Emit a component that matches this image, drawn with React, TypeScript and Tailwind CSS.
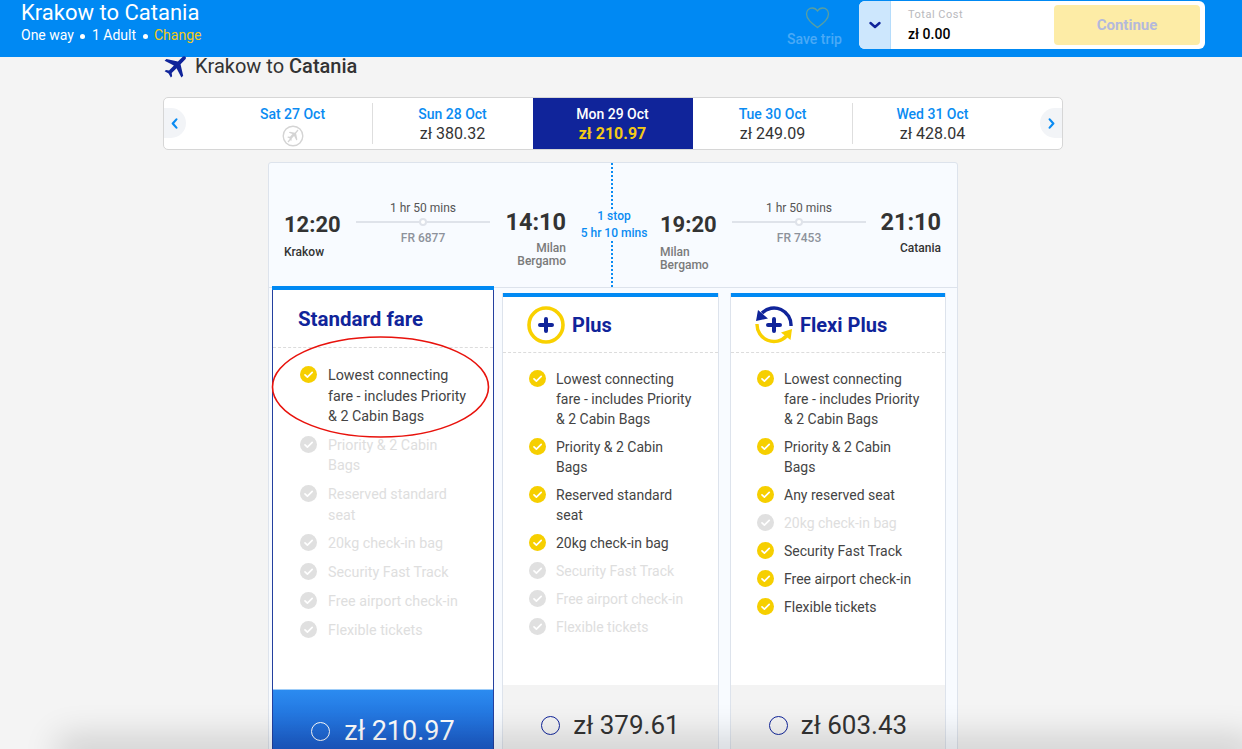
import { MdFlight } from 'react-icons/md';

type Day = { label: string; price?: string; selected?: boolean };
type Feature = { text: string; on: boolean };

const DAYS: Day[] = [
  { label: 'Sat 27 Oct' },
  { label: 'Sun 28 Oct', price: 'zł 380.32' },
  { label: 'Mon 29 Oct', price: 'zł 210.97', selected: true },
  { label: 'Tue 30 Oct', price: 'zł 249.09' },
  { label: 'Wed 31 Oct', price: 'zł 428.04' },
];

const STANDARD: Feature[] = [
  { text: 'Lowest connecting fare - includes Priority & 2 Cabin Bags', on: true },
  { text: 'Priority & 2 Cabin Bags', on: false },
  { text: 'Reserved standard seat', on: false },
  { text: '20kg check-in bag', on: false },
  { text: 'Security Fast Track', on: false },
  { text: 'Free airport check-in', on: false },
  { text: 'Flexible tickets', on: false },
];

const PLUS: Feature[] = [
  { text: 'Lowest connecting fare - includes Priority & 2 Cabin Bags', on: true },
  { text: 'Priority & 2 Cabin Bags', on: true },
  { text: 'Reserved standard seat', on: true },
  { text: '20kg check-in bag', on: true },
  { text: 'Security Fast Track', on: false },
  { text: 'Free airport check-in', on: false },
  { text: 'Flexible tickets', on: false },
];

const FLEXI: Feature[] = [
  { text: 'Lowest connecting fare - includes Priority & 2 Cabin Bags', on: true },
  { text: 'Priority & 2 Cabin Bags', on: true },
  { text: 'Any reserved seat', on: true },
  { text: '20kg check-in bag', on: false },
  { text: 'Security Fast Track', on: true },
  { text: 'Free airport check-in', on: true },
  { text: 'Flexible tickets', on: true },
];

function Dot() {
  return <span className="mx-[6.500px] inline-block h-[5px] w-[5px] rounded-full bg-white align-middle" />;
}

function Chevron({ dir, color, size = 12 }: { dir: 'left' | 'right' | 'down'; color: string; size?: number }) {
  const d = dir === 'left' ? 'M7 1.500 3 6l4 4.500' : dir === 'right' ? 'M4 1.500 8 6l-4 4.500' : 'M1.500 4 6 8l4.500-4';
  return (
    <svg width={size} height={size} viewBox="0 0 12 12" fill="none">
      <path d={d} stroke={color} strokeWidth="2.400" strokeLinecap="round" strokeLinejoin="round" />
    </svg>
  );
}

function NoFlight() {
  return (
    <svg width="22" height="22" viewBox="0 0 22 22" fill="none">
      <circle cx="11" cy="11" r="9.800" stroke="#d4d4d4" strokeWidth="1.400" />
      <path d="M15.500 5.500 13 8l1.400 6.500-1 1-2.400-4.700-2.600 2.500.3 2-.8.7-1.200-2.600-2.400-1.200.7-.8 2 .3 2.500-2.600L5.800 7.700l1-1L13.300 8z" fill="#d4d4d4" transform="translate(1 0)" />
      <path d="M6 17 16 5" stroke="#d4d4d4" strokeWidth="1.200" />
    </svg>
  );
}

function Check({ on }: { on: boolean }) {
  return (
    <svg width="17" height="17" viewBox="0 0 17 17" className="shrink-0">
      <circle cx="8.500" cy="8.500" r="8.500" fill={on ? '#f6cf00' : '#e0e0e0'} />
      <path d="M5 8.800l2.400 2.300L12.200 6.400" fill="none" stroke="#fff" strokeWidth="1.700" strokeLinecap="round" strokeLinejoin="round" />
    </svg>
  );
}

function PlusIcon() {
  return (
    <svg width="38" height="38" viewBox="0 0 38 38" fill="none">
      <circle cx="19" cy="19" r="17" stroke="#f9d100" strokeWidth="3.600" />
      <path d="M19 13v12M13 19h12" stroke="#10249a" strokeWidth="4" strokeLinecap="round" />
    </svg>
  );
}

function FlexiIcon() {
  return (
    <svg width="38" height="38" viewBox="0 0 38 38" fill="none">
      <path d="M36 20A17 17 0 0 0 7 7" stroke="#10249a" strokeWidth="3.400" />
      <path d="M1 15 3 4l10 8.500z" fill="#10249a" />
      <path d="M2 18a17 17 0 0 0 29.500 12" stroke="#f9d100" strokeWidth="3.400" />
      <path d="M37 23 35.500 34 26 26.500z" fill="#f9d100" />
      <path d="M19 13v12M13 19h12" stroke="#10249a" strokeWidth="4" strokeLinecap="round" />
    </svg>
  );
}

function Leg({ from, to, flight, fromBold, toBold }: { from: [string, string[]]; to: [string, string[]]; flight: string; fromBold: boolean; toBold: boolean }) {
  return (
    <div className="flex items-start">
      <div className="mt-[3px] w-[58px]">
        <div className="text-[22px] font-bold leading-[28px] text-[#333]">{from[0]}</div>
        <div className={`mt-[7px] text-[12px] font-medium leading-[13px] ${fromBold ? 'text-[#333]' : 'text-[#7a7a7a]'}`}>
          {from[1].map((l) => (
            <div key={l}>{l}</div>
          ))}
        </div>
      </div>
      <div className="ml-[14px] mt-[-8px] w-[134px] text-center">
        <div className="text-[12px] leading-[16px] text-[#555]">1 hr 50 mins</div>
        <div className="relative mb-[7px] mt-[5px] h-[2px] bg-[#dfe3ea]">
          <span className="absolute left-[63px] top-[-3px] h-[8px] w-[8px] rounded-full border-2 border-[#dfe3ea] bg-white" />
        </div>
        <div className="text-[12px] font-medium leading-[16px] text-[#8d929b]">{flight}</div>
      </div>
      <div className={`ml-[14px] text-right ${toBold ? 'w-[61px]' : 'w-[62px]'}`}>
        <div className="text-[23.500px] font-bold leading-[28px] text-[#333]">{to[0]}</div>
        <div className={`mt-[6px] text-[12px] font-medium leading-[13px] ${toBold ? 'text-[#333]' : 'text-[#7a7a7a]'}`}>
          {to[1].map((l) => (
            <div key={l}>{l}</div>
          ))}
        </div>
      </div>
    </div>
  );
}

function FareList({ items, tall }: { items: Feature[]; tall?: boolean }) {
  return (
    <ul className={tall ? 'flex flex-col gap-[8.300px] pl-[27px] pr-[23px] pt-[17px]' : 'flex flex-col gap-[8px] pl-[26px] pr-[22px] pt-[16px]'}>
      {items.map((f) => (
        <li key={f.text} className={`flex ${tall ? 'gap-[11px] text-[14.300px] leading-[20.500px]' : 'gap-[10px] text-[14px] leading-[20px]'} ${f.on ? 'text-[#444]' : 'text-[#dedede]'}`}>
          <span className="mt-[1px]">
            <Check on={f.on} />
          </span>
          <span>{f.text}</span>
        </li>
      ))}
    </ul>
  );
}

export default function App() {
  return (
    <div className="relative h-[749px] overflow-hidden bg-[#f4f4f4] font-['Roboto',sans-serif]">
      <header className="flex h-[57px] items-start justify-between bg-[#0089f3] pl-[21px] pr-[37px]">
        <div className="text-white">
          <div className="text-[22px] leading-[26px]">Krakow to Catania</div>
          <div className="mt-[1px] text-[14px] leading-[17px]">
            One way
            <Dot />1 Adult
            <Dot />
            <span className="text-[#f4ca16]">Change</span>
          </div>
        </div>
        <div className="flex items-start">
          <div className="mr-[17px] mt-[7px] flex w-[55px] flex-col items-center">
            <svg className="ml-[5px]" width="25" height="22" viewBox="0 0 25 23" fill="none">
              <path d="M12.500 21.500C6 16.500 1 12.500 1 7.200 1 3.600 3.700 1 7 1c2.300 0 4.300 1.200 5.500 3.200C13.700 2.200 15.700 1 18 1c3.300 0 6 2.600 6 6.200 0 5.300-5 9.300-11.500 14.300z" stroke="#5a9f9f" strokeWidth="1.400" />
            </svg>
            <div className="mt-[2px] whitespace-nowrap text-[14px] font-medium leading-[16px] text-[#4aa9f6]">Save trip</div>
          </div>
          <div className="mt-[1px] flex h-[48px] w-[346px] items-center overflow-hidden rounded-[6px] bg-white">
            <div className="flex h-full w-[32px] items-center justify-center border-r border-[#b5dcfb] bg-[#cde7fd]">
              <Chevron dir="down" color="#10249a" />
            </div>
            <div className="ml-[17px] w-[146px]">
              <div className="text-[11px] leading-[14px] tracking-[0.500px] text-[#b9b9bd]">Total Cost</div>
              <div className="mt-[3px] text-[14px] font-medium leading-[18px] text-black">zł 0.00</div>
            </div>
            <div className="flex h-[40px] w-[146px] items-center justify-center rounded-[4px] bg-[#fdeca6] text-[15px] font-bold text-[#b4b9dc]">Continue</div>
          </div>
        </div>
      </header>

      <div className="w-[1226px]">
        <div className="mx-auto -mt-[1px] flex h-[20px] w-[900px] items-center pl-[2px]">
          <MdFlight className="-mx-[3px] h-[30px] w-[30px] shrink-0 rotate-45 text-[#10249a]" />
          <h1 className="ml-[6px] text-[20px] leading-[20px] text-[#333]">
            Krakow to <span className="font-medium">Catania</span>
          </h1>
        </div>

        <div className="mx-auto mt-[21px] flex h-[53px] w-[900px] items-stretch justify-between overflow-hidden rounded-[5px] border border-[#d6d6d6] bg-white">
          <div className="mt-[10px] flex h-[30px] w-[22px] items-center justify-center rounded-r-full bg-[#f2f4f7]">
            <Chevron dir="left" color="#0a8bf2" size={11} />
          </div>
          <div className="flex">
            {DAYS.map((d, i) => (
              <div key={d.label} className={`relative flex w-[160px] flex-col items-center pr-[1px] pt-[7px] ${d.selected ? 'bg-[#10249a]' : ''}`}>
                {(i === 1 || i === 4) && <span className="absolute -left-px top-[5px] h-[41px] w-px bg-[#dedede]" />}
                <div className={`text-[14px] font-medium leading-[18px] ${d.selected ? 'text-white' : 'text-[#0a8bf2]'}`}>{d.label}</div>
                {d.price ? (
                  <div className={`mt-[1px] text-[16px] leading-[19px] ${d.selected ? 'font-bold text-[#f4ca16]' : 'text-[#333]'}`}>{d.price}</div>
                ) : (
                  <div className="mt-[2px]">
                    <NoFlight />
                  </div>
                )}
              </div>
            ))}
          </div>
          <div className="mt-[10px] flex h-[30px] w-[22px] items-center justify-center rounded-l-full bg-[#f2f4f7]">
            <Chevron dir="right" color="#0a8bf2" size={11} />
          </div>
        </div>

        <main className="mx-auto mt-[12px] h-[640px] w-[690px] rounded-t-[3px] border border-[#dde3ec] bg-[#f8fbff]">
          <div className="relative flex h-[125px] justify-between border-b border-[#dde3ec] pl-[15px] pr-[16px] pt-[45px]">
            <Leg from={['12:20', ['Krakow']]} to={['14:10', ['Milan', 'Bergamo']]} flight="FR 6877" fromBold toBold={false} />
            <Leg from={['19:20', ['Milan', 'Bergamo']]} to={['21:10', ['Catania']]} flight="FR 7453" fromBold={false} toBold />
            <div className="absolute left-[342px] top-0 h-[46px] border-l-2 border-dotted border-[#0a8bf2]" />
            <div className="absolute left-[300px] top-[45px] w-[90px] text-center text-[12px] font-medium leading-[17px] text-[#0a8bf2]">
              <div>1 stop</div>
              <div>5 hr 10 mins</div>
            </div>
            <div className="absolute bottom-0 left-[342px] h-[46px] border-l-2 border-dotted border-[#0a8bf2]" />
          </div>

          <div className="flex items-start pl-[3px]">
            <section className="relative -mt-[2px] flex h-[483px] w-[222px] flex-col border-x-[1.500px] border-[#24409f] bg-white">
              <div className="-mx-px h-[4px] bg-[#0089f3]" />
              <div className="flex h-[58px] items-center border-b border-dashed border-[#dcdcdc] pl-[25px] pt-[1px] text-[20.500px] font-bold text-[#10249a]">Standard fare</div>
              <FareList items={STANDARD} tall />
              <div className="mt-auto h-[80px] border-t border-[#9fcdf8] bg-gradient-to-b from-[#2b8bf0] to-[#1a4cc0] pt-[25px]">
                <div className="flex items-center justify-center gap-[14px] text-[27px] leading-[32px] text-white">
                  <span className="h-[19px] w-[19px] rounded-full border-[1.500px] border-white" />
                  zł 210.97
                </div>
              </div>
            </section>

            <section className="ml-[8px] mt-[5px] flex h-[472px] w-[217px] flex-col border-x border-[#dde3ec] bg-white">
              <div className="h-[4px] bg-[#0089f3]" />
              <div className="flex h-[56px] items-center gap-[7px] border-b border-dashed border-[#dcdcdc] pl-[24px] text-[20px] font-bold text-[#10249a]">
                <PlusIcon />
                Plus
              </div>
              <FareList items={PLUS} />
              <div className="mt-auto h-[80px] bg-[#f3f3f3] pt-[24px]">
                <div className="flex items-center justify-center gap-[13px] text-[26px] leading-[32px] text-[#333]">
                  <span className="h-[19px] w-[19px] rounded-full border-[1.500px] border-[#10249a]" />
                  zł 379.61
                </div>
              </div>
            </section>

            <section className="ml-[11px] mt-[5px] flex h-[472px] w-[216px] flex-col border-x border-[#dde3ec] bg-white">
              <div className="h-[4px] bg-[#0089f3]" />
              <div className="flex h-[56px] items-center gap-[7px] border-b border-dashed border-[#dcdcdc] pl-[24px] text-[20px] font-bold text-[#10249a]">
                <FlexiIcon />
                Flexi Plus
              </div>
              <FareList items={FLEXI} />
              <div className="mt-auto h-[80px] bg-[#f3f3f3] pt-[24px]">
                <div className="flex items-center justify-center gap-[13px] text-[26px] leading-[32px] text-[#333]">
                  <span className="h-[19px] w-[19px] rounded-full border-[1.500px] border-[#10249a]" />
                  zł 603.43
                </div>
              </div>
            </section>
          </div>
        </main>
      </div>

      {/* hand drawn annotation from the original screenshot */}
      <svg className="pointer-events-none absolute left-[270px] top-[335px]" width="222" height="104" viewBox="0 0 222 104" fill="none">
        <ellipse cx="110.500" cy="52" rx="108" ry="50" stroke="#e8120c" strokeWidth="1.600" />
      </svg>

      {/* sticky footer shadow coming up from below the fold */}
      <div className="pointer-events-none absolute -bottom-[10px] left-[70px] right-0 h-[10px] shadow-[0_0_34px_12px_rgba(0,0,0,0.16)]" />
    </div>
  );
}
